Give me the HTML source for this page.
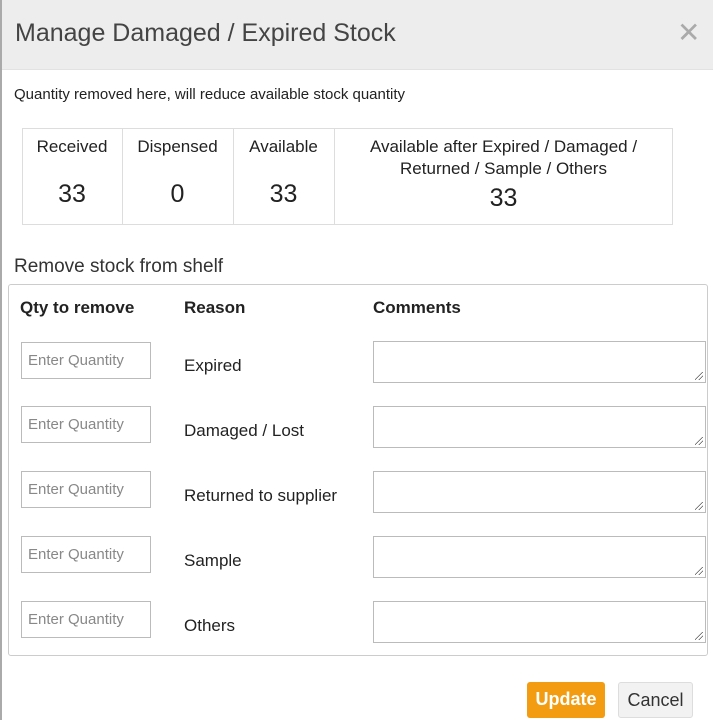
<!DOCTYPE html><html><head><style>
body{margin:0;width:713px;height:720px;overflow:hidden;background:#fff;font-family:"Liberation Sans",sans-serif;color:#222;position:relative}
.a{position:absolute;white-space:nowrap}
.hdr{left:0;top:0;width:713px;height:69px;background:#ededed;border-bottom:1px solid #e2e2e2}
.lb{left:0;top:0;width:2px;height:720px;background:#aaa}
.inp{position:absolute;left:21px;font-size:15px;color:#888;line-height:35px;padding-left:6px;box-sizing:border-box;width:130px;height:37px;border:1px solid #bbb}
.ta{position:absolute;left:373px;width:333px;height:42px;border:1px solid #bbb;box-sizing:border-box}
.ta:after{content:"";position:absolute;right:2px;bottom:2px;width:8px;height:8px;background:linear-gradient(135deg,transparent 45%,#555 45%,#555 52%,transparent 52%,transparent 70%,#555 70%,#555 77%,transparent 77%)}
.rs{position:absolute;left:184px;font-size:17px}
.c{position:absolute;text-align:center;font-size:17px}
.n{font-size:25px}
</style></head><body>
<div class="a hdr"></div><div class="a lb"></div>
<div class="a" style="left:15px;top:19px;font-size:25px;color:#444">Manage Damaged / Expired Stock</div>
<div class="a" style="left:677px;top:16px;font-size:28px;color:#aaa">✕</div>
<div class="a" style="left:14px;top:86px;font-size:15px">Quantity removed here, will reduce available stock quantity</div>
<div class="a" style="left:22px;top:128px;width:651px;height:97px;border:1px solid #ddd;box-sizing:border-box"></div>
<div class="a" style="left:122px;top:128px;width:1px;height:97px;background:#ddd"></div>
<div class="a" style="left:233px;top:128px;width:1px;height:97px;background:#ddd"></div>
<div class="a" style="left:334px;top:128px;width:1px;height:97px;background:#ddd"></div>
<div class="c" style="left:22px;width:100px;top:137px">Received<div class="n" style="margin-top:23px">33</div></div>
<div class="c" style="left:122px;width:111px;top:137px">Dispensed<div class="n" style="margin-top:23px">0</div></div>
<div class="c" style="left:233px;width:101px;top:137px">Available<div class="n" style="margin-top:23px">33</div></div>
<div class="c" style="left:334px;width:339px;top:136px;line-height:22px">Available after Expired / Damaged /<br>Returned / Sample / Others<div class="n" style="line-height:36px">33</div></div>
<div class="a" style="left:14px;top:256px;font-size:19px;color:#333">Remove stock from shelf</div>
<div class="a" style="left:8px;top:284px;width:700px;height:372px;border:1px solid #ccc;border-radius:3px;box-sizing:border-box"></div>
<div class="a" style="left:20px;top:298px;font-size:17px;font-weight:bold">Qty to remove</div>
<div class="a" style="left:184px;top:298px;font-size:17px;font-weight:bold">Reason</div>
<div class="a" style="left:373px;top:298px;font-size:17px;font-weight:bold">Comments</div>
<div class="inp" style="top:342px">Enter Quantity</div><div class="rs" style="top:356px">Expired</div><div class="ta" style="top:341px"></div>
<div class="inp" style="top:406px">Enter Quantity</div><div class="rs" style="top:421px">Damaged / Lost</div><div class="ta" style="top:406px"></div>
<div class="inp" style="top:471px">Enter Quantity</div><div class="rs" style="top:486px">Returned to supplier</div><div class="ta" style="top:471px"></div>
<div class="inp" style="top:536px">Enter Quantity</div><div class="rs" style="top:551px">Sample</div><div class="ta" style="top:536px"></div>
<div class="inp" style="top:601px">Enter Quantity</div><div class="rs" style="top:616px">Others</div><div class="ta" style="top:601px"></div>
<div class="a" style="left:527px;top:682px;width:78px;height:36px;background:#f39c12;border-radius:3px;color:#fff;font-size:18px;font-weight:bold;text-align:center;line-height:35px">Update</div>
<div class="a" style="left:618px;top:682px;width:75px;height:36px;background:#f2f2f2;border:1px solid #ddd;box-sizing:border-box;border-radius:3px;color:#333;font-size:18px;text-align:center;line-height:34px">Cancel</div>
</body></html>
